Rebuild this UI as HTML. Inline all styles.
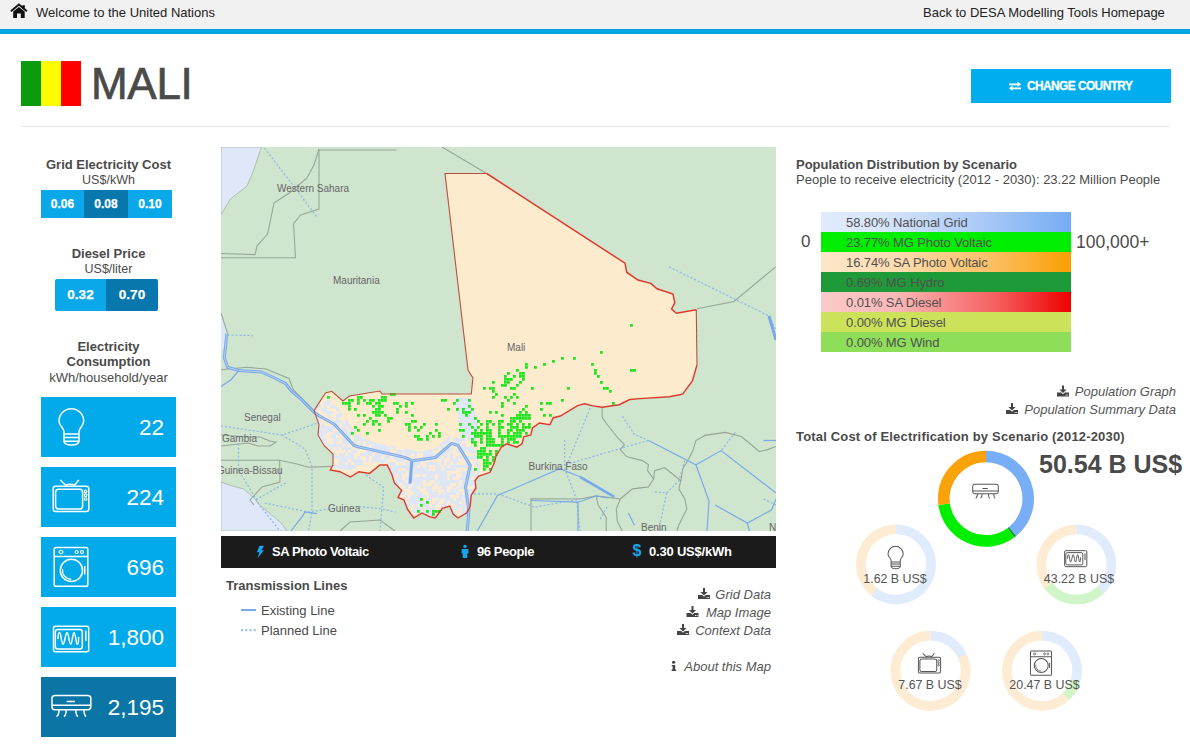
<!DOCTYPE html>
<html><head><meta charset="utf-8">
<style>
*{margin:0;padding:0;box-sizing:border-box}
html,body{width:1190px;height:749px;overflow:hidden;background:#fff;font-family:"Liberation Sans",sans-serif;color:#4a4a4a}
.a{position:absolute;white-space:nowrap}
#topbar{position:absolute;left:0;top:0;width:1190px;height:29px;background:#f1f1f1}
#blueline{position:absolute;left:0;top:29px;width:1190px;height:5px;background:#00a6e2}
.tb{font-size:13px;color:#222;letter-spacing:0;top:5px}
#flag{position:absolute;left:21px;top:61px;width:60px;height:45px}
#flag i{display:block;float:left;width:20px;height:45px}
#mali{left:91px;top:59px;font-size:44px;color:#4a4a4a;letter-spacing:-0.3px;-webkit-text-stroke:0.7px #4a4a4a}
#chg{position:absolute;left:971px;top:69px;width:200px;height:34px;background:#00aeef;color:#fff}
#hr{position:absolute;left:21px;top:126px;width:1149px;height:1px;background:#e8e8e8}
.h{font-weight:bold;font-size:13px;color:#4a4a4a}
.sub{font-size:12.5px;color:#4a4a4a}
.btn{position:absolute;background:#0aa8e8;color:#fff;font-weight:bold;text-align:center;-webkit-text-stroke:0.25px #fff}
.dk{background:#0877ad}
.card{position:absolute;left:41px;width:135px;height:60px;background:#03aaea}
.card .n{position:absolute;right:12px;top:17.5px;font-size:22.5px;color:#fff}
.card svg{position:absolute}
.lnk{font-style:italic;font-size:13px;color:#555}
.bar{position:absolute;left:821px;width:250px;height:20px;font-size:13px;color:#505050;letter-spacing:-0.1px;padding-left:25px;line-height:21px}
.dtext{font-size:12.4px;color:#555;text-align:center}
</style></head><body>
<div id="topbar"></div>
<div id="blueline"></div>
<svg class="a" style="left:0;top:0" width="30" height="22" viewBox="0 0 30 22"><path d="M10.9,11.2 L18.9,4.6 L26.9,11.2" fill="none" stroke="#111" stroke-width="1.9" stroke-linejoin="miter"/><rect x="22.3" y="5.2" width="2.5" height="4" fill="#111"/><path d="M13.2,11.6 L18.9,7 L24.7,11.6 V17.9 H20.8 V13.6 H17 V17.9 H13.2 Z" fill="#111"/></svg>
<div class="a tb" style="left:36px">Welcome to the United Nations</div>
<div class="a tb" style="left:923px">Back to DESA Modelling Tools Homepage</div>

<div id="flag"><i style="background:#0b9a0b"></i><i style="background:#fefe00"></i><i style="background:#fe0000"></i></div>
<div class="a" id="mali">MALI</div>
<div id="chg">
 <svg class="a" style="left:37px;top:11px" width="14" height="12" viewBox="0 0 14 12"><path d="M1,3.4 H9.5 V1.6 L13,4.3 L9.5,7 V5.2 H1 Z M13,7.4 H4.5 V5.6 L1,8.3 L4.5,11 V9.2 H13 Z" fill="#fff"/></svg>
 <div class="a" style="left:56px;top:9px;font-weight:bold;font-size:13px;letter-spacing:-0.6px;transform:scaleX(0.913);transform-origin:0 0;-webkit-text-stroke:0.3px #fff">CHANGE COUNTRY</div>
</div>
<div id="hr"></div>

<!-- left column -->
<div class="a h" style="left:41px;width:135px;text-align:center;top:157px">Grid Electricity Cost</div>
<div class="a sub" style="left:41px;width:135px;text-align:center;top:173px">US$/kWh</div>
<div class="btn" style="left:41px;top:190px;width:43px;height:28px;line-height:28px;font-size:12px">0.06</div>
<div class="btn dk" style="left:84px;top:190px;width:44px;height:28px;line-height:28px;font-size:12px">0.08</div>
<div class="btn" style="left:128px;top:190px;width:44px;height:28px;line-height:28px;font-size:12px">0.10</div>

<div class="a h" style="left:41px;width:135px;text-align:center;top:246px">Diesel Price</div>
<div class="a sub" style="left:41px;width:135px;text-align:center;top:262px">US$/liter</div>
<div class="btn" style="left:55px;top:279px;width:51px;height:32px;line-height:32px;font-size:13.5px;border-radius:2px 0 0 2px">0.32</div>
<div class="btn dk" style="left:106px;top:279px;width:52px;height:32px;line-height:32px;font-size:13.5px;border-radius:0 2px 2px 0">0.70</div>

<div class="a h" style="left:41px;width:135px;text-align:center;top:339px;line-height:15px">Electricity<br>Consumption</div>
<div class="a sub" style="left:41px;width:135px;text-align:center;top:370px;font-size:13px">kWh/household/year</div>

<div class="card" style="top:397px"><div class="n">22</div></div>
<div class="card" style="top:467px"><div class="n">224</div></div>
<div class="card" style="top:537px"><div class="n">696</div></div>
<div class="card" style="top:607px"><div class="n">1,800</div></div>
<div class="card" style="top:677px;background:#0b76a5"><div class="n">2,195</div></div>

<!--ICONS--><svg class="a" style="left:0;top:0" width="200" height="749" viewBox="0 0 200 749"><path d="M64,434 L64,431.5 C64,428 59,426 59,421 A12.35,12.35 0 0 1 83.7,421 C83.7,426 79,428 79,431.5 L79,434 Z M64,434 V441.5 C64.5,444 67.5,445 71.5,445 C75.5,445 78.5,444 79,441.5 V434 M64,437.6 H79 M64,441.2 H79" fill="none" stroke="#fff" stroke-width="1.5" stroke-linejoin="round"/><rect x="53.2" y="486.2" width="35.6" height="25.2" rx="2.5" fill="none" stroke="#fff" stroke-width="1.5"/><rect x="55.6" y="489.2" width="27" height="19.9" rx="3" fill="none" stroke="#fff" stroke-width="1.5"/><circle cx="85.6" cy="491.4" r="1.3" fill="none" stroke="#fff" stroke-width="1.125"/><circle cx="85.6" cy="495.2" r="1.3" fill="none" stroke="#fff" stroke-width="1.125"/><circle cx="85.6" cy="499" r="1.3" fill="none" stroke="#fff" stroke-width="1.125"/><path d="M60.3,480 L65.3,485 Q70,483.5 74.7,485 L78.8,480" fill="none" stroke="#fff" stroke-width="1.5"/><rect x="54.2" y="547.5" width="33.6" height="38.7" rx="1.8" fill="none" stroke="#fff" stroke-width="1.5"/><path d="M54.2,556.4 H87.8 M84.7,566 V574.4" fill="none" stroke="#fff" stroke-width="1.5"/><ellipse cx="61" cy="552" rx="2" ry="1.5" fill="none" stroke="#fff" stroke-width="1.2000000000000002"/><circle cx="76.7" cy="552" r="1.5" fill="none" stroke="#fff" stroke-width="1.2000000000000002"/><circle cx="82" cy="552" r="1.5" fill="none" stroke="#fff" stroke-width="1.2000000000000002"/><circle cx="71.4" cy="570.4" r="11.1" fill="none" stroke="#fff" stroke-width="1.5"/><path d="M62.6,569 A9,9 0 0 0 71.4,579.4" fill="none" stroke="#fff" stroke-width="1.125"/><rect x="53.5" y="626.3" width="35.2" height="25.4" rx="2" fill="none" stroke="#fff" stroke-width="1.5"/><rect x="55.3" y="629.4" width="27" height="19.5" rx="2.5" fill="none" stroke="#fff" stroke-width="1.5"/><path d="M85.8,630.6 V641 M58,639 C58,636 58.5,632.5 59.6,632.5 C61,632.5 61.5,644.3 63,644.3 C64.6,644.3 65.6,632.5 67.1,632.5 C68.6,632.5 69.2,644.3 70.7,644.3 C72.2,644.3 72.6,632.5 74,632.5 C75.5,632.5 76,644.3 77.4,644.3 C78.4,644.3 78.6,640 78.6,637" fill="none" stroke="#fff" stroke-width="1.5"/><rect x="52" y="695.4" width="38.8" height="14.4" rx="3" fill="none" stroke="#fff" stroke-width="1.5"/><path d="M52,705.3 H90.8 M66.7,701.6 H74.8 M59,710 C59,713 59,715 56.5,716.6 M66.2,710 C66.2,713 66.2,715 64,716.6 M75.8,710 C75.8,713 75.8,715 77.8,716.6 M84,710 C84,713 84,715 86,716.6" fill="none" stroke="#fff" stroke-width="1.5"/></svg><!--/ICONS-->
<!-- map -->
<!--MAP--><svg class="a" style="left:221px;top:147px" width="555" height="384" viewBox="221 147 555 384">
<rect x="221" y="147" width="555" height="384" fill="#cfe5ce"/>
<path d="M221,147 L261.4,147 L253,172 L247,186 L230.4,199 L221,215 Z" fill="#dfe8f9" stroke="#a5b5a5" stroke-width="0.8"/>
<path d="M221,482 L231.5,485.7 L243.7,489 L254,498 L259.5,505 L270,513.6 L280.4,522.4 L287.4,531 L221,531 Z" fill="#dfe8f9" stroke="#a5b5a5" stroke-width="0.8"/>
<path d="M221,313 L227.6,333.6 L225,345 L221,352 Z" fill="#dfe8f9"/>
<g fill="none" stroke="#97a697" stroke-width="1.1"><path d="M319,149 L314,165 L307,178 L290,192.5 L274,203 L267.6,234 L257,246 L255,254.6 L221,253.5"/><path d="M221,257.7 L295.5,257.7 L293.5,223.6 L300.7,215 L319,209 L319,150 L396.6,150"/><path d="M442,147 L486.7,173.5"/><path d="M697,308.8 L734,301.5 L775.7,266.8"/><path d="M221,435 L248,437 L260,437 L270,441 L276,442 L270,446 L258,446 L248,443 L221,446"/><path d="M221,460.3 L279.6,460.3 L296,463.8 L308.4,467.3 L331,466.4"/><path d="M279.6,460.3 L280,482 L262,487 L250,500 L254,505"/><path d="M221,369.7 L246.8,367.3 L266,369 L289,378.5 L293.3,389.7 L314,410.6"/><path d="M221,313 L227.6,333.6"/><path d="M602.2,407.2 L602.2,417.3 L606.2,423.3 L618.3,438.5 L624.4,444.5 L620.3,449.6 L626.4,456.6 L642.5,460.6 L648.5,464.7 L647.5,470.7 L653.6,478.8 L654.6,470.7 L664.7,467.7 L680.8,480.8 L678.8,488.9 L684.8,499 L686.9,509 L682.8,517.1 L678.8,525.2 L676.8,531"/><path d="M680.8,480.8 L682.8,468.7 L688.9,458.6 L692.9,450.6 L695.9,440.5 L705,435.4 L725.2,432.4 L741.3,436.5 L753.4,446.5 L759.4,451.6 L767.5,449.6 L776,446.5"/><path d="M531,531 L531,498.8 L580,499 L596.1,495.9 L620.3,499 L616.3,509 L617.3,521.1 L622.3,531"/><path d="M620.3,499 L632.4,488.9 L648.5,486.9 L653.6,478.8"/><path d="M596.1,495.9 L598.1,505 L606.2,517.1 L606.2,531"/><path d="M340,531 L350,522 L380,520 L395,531"/></g>
<g fill="none" stroke="#8fb4e6" stroke-width="1.2" stroke-dasharray="2,2"><path d="M264.5,148 L317,217"/><path d="M669,266.8 L769,316 L776,330"/><path d="M221,426 L282,435 L313.7,424.5 L327.6,419"/><path d="M282,435 L305,449 L312,466.4 L312,512 L308.4,531"/><path d="M238.5,443.7 L238.5,470 L259.5,505 L280,531"/><path d="M256,499.6 L287.4,482"/><path d="M264.7,503 L308.4,512 L333,508.4"/><path d="M359,506.6 L378.3,508.4 L395.8,512"/><path d="M366,475 L383.6,487.4 L380,531"/><path d="M474,493.8 L497.5,493.8 L534.5,507.2 L580,499"/><path d="M564.7,440 L564.7,468.6 L576.5,498.8 L580,531"/><path d="M413.4,477 L472.3,493.8"/><path d="M590.1,408.2 L565.7,467.4"/><path d="M565.7,464.6 L620.3,448.5 L648.5,440.5"/><path d="M622.3,416.3 L634.4,434.4 L648.5,440.5"/><path d="M735.2,432.4 L721.1,450.6"/><path d="M684.8,460.6 L678.8,480.8 L666.7,492.9 L654.6,491.9"/><path d="M666.7,492.9 L660.6,521.1 L658,531"/><path d="M763.5,499 L776,505"/><path d="M600.2,519.1 L608.2,505"/><path d="M227.6,335 L253,335.6"/></g>
<path d="M445,173.5 L486.7,173.5 L625,263.2 L626.7,272.2 L638,280 L650.8,283.4 L657,288.8 L673,294 L674.8,302.6 L671.6,309 L676.4,313.2 L696.3,309.7 L697,365 L692.4,381 L682.8,394 L680.7,394.5 L669.5,396.8 L640,398.6 L629.7,399.5 L619.3,404.7 L602,407.3 L591.5,405.6 L584.6,403.8 L577.6,405.6 L560.3,416 L553.3,417.7 L549.9,424.7 L539.4,423 L532.5,428 L530.8,435 L523.8,436.8 L522,443.8 L516.9,447.2 L506.5,443.8 L501.3,447.2 L496,456 L494.3,462.8 L490,472.3 L483.4,474.7 L478.6,476 L475,480.7 L476,488 L471.3,495 L470,507 L466.5,513 L458,518 L453.3,514.3 L449.7,506 L442.5,508.3 L435.3,518 L429.3,516.7 L422,513 L413.7,518 L407.6,509.5 L404,500 L398,497.5 L401.6,490.3 L394.4,483 L392,474.7 L387.2,465 L380,465 L369.6,473.4 L359,471.7 L350.4,477 L339.9,471.7 L330.3,470 L333,464.7 L333,454 L324,445.5 L318,435 L319,424.5 L314,410.6 L325.4,393 L331.8,391.3 L343,401 L349.4,396 L380,391 L382,394 L471.3,394 L472.9,378 L468,370 Z" fill="#fdebcd"/>
<clipPath id="mc"><path d="M445,173.5 L486.7,173.5 L625,263.2 L626.7,272.2 L638,280 L650.8,283.4 L657,288.8 L673,294 L674.8,302.6 L671.6,309 L676.4,313.2 L696.3,309.7 L697,365 L692.4,381 L682.8,394 L680.7,394.5 L669.5,396.8 L640,398.6 L629.7,399.5 L619.3,404.7 L602,407.3 L591.5,405.6 L584.6,403.8 L577.6,405.6 L560.3,416 L553.3,417.7 L549.9,424.7 L539.4,423 L532.5,428 L530.8,435 L523.8,436.8 L522,443.8 L516.9,447.2 L506.5,443.8 L501.3,447.2 L496,456 L494.3,462.8 L490,472.3 L483.4,474.7 L478.6,476 L475,480.7 L476,488 L471.3,495 L470,507 L466.5,513 L458,518 L453.3,514.3 L449.7,506 L442.5,508.3 L435.3,518 L429.3,516.7 L422,513 L413.7,518 L407.6,509.5 L404,500 L398,497.5 L401.6,490.3 L394.4,483 L392,474.7 L387.2,465 L380,465 L369.6,473.4 L359,471.7 L350.4,477 L339.9,471.7 L330.3,470 L333,464.7 L333,454 L324,445.5 L318,435 L319,424.5 L314,410.6 L325.4,393 L331.8,391.3 L343,401 L349.4,396 L380,391 L382,394 L471.3,394 L472.9,378 L468,370 Z"/></clipPath><g fill="#dfe7f5" clip-path="url(#mc)"><path d="M314,408 L328,398 L340,410 L352,428 L362,438 L380,444 L404,448 L420,452 L436,448 L450,436 L462,436 L476,446 L480,470 L476,490 L472,508 L466,518 L450,522 L430,522 L410,522 L400,505 L392,480 L386,466 L372,464 L350,470 L334,468 L330,460 L322,445 L316,430 Z"/><path d="M455,398 L470,398 L478,420 L476,445 L462,440 Z"/></g>
<path d="M315,423h3v3h-3z M318,408h3v3h-3z M318,411h3v3h-3z M318,414h3v3h-3z M318,423h3v3h-3z M321,402h3v3h-3z M321,405h3v3h-3z M321,411h3v3h-3z M321,414h3v3h-3z M321,417h3v3h-3z M321,420h3v3h-3z M324,399h3v3h-3z M324,414h3v3h-3z M324,417h3v3h-3z M324,420h3v3h-3z M324,423h3v3h-3z M324,435h3v3h-3z M324,444h3v3h-3z M324,447h3v3h-3z M327,405h3v3h-3z M327,408h3v3h-3z M327,417h3v3h-3z M327,420h3v3h-3z M327,423h3v3h-3z M327,432h3v3h-3z M327,435h3v3h-3z M327,438h3v3h-3z M327,441h3v3h-3z M327,447h3v3h-3z M330,402h3v3h-3z M330,408h3v3h-3z M330,414h3v3h-3z M330,420h3v3h-3z M330,423h3v3h-3z M330,432h3v3h-3z M330,438h3v3h-3z M330,441h3v3h-3z M330,450h3v3h-3z M330,456h3v3h-3z M330,459h3v3h-3z M333,408h3v3h-3z M333,411h3v3h-3z M333,414h3v3h-3z M333,417h3v3h-3z M333,423h3v3h-3z M333,429h3v3h-3z M333,447h3v3h-3z M333,450h3v3h-3z M333,459h3v3h-3z M333,462h3v3h-3z M336,411h3v3h-3z M336,426h3v3h-3z M336,429h3v3h-3z M336,435h3v3h-3z M336,441h3v3h-3z M336,450h3v3h-3z M336,453h3v3h-3z M336,459h3v3h-3z M336,462h3v3h-3z M339,417h3v3h-3z M339,423h3v3h-3z M339,426h3v3h-3z M339,429h3v3h-3z M339,435h3v3h-3z M339,438h3v3h-3z M339,441h3v3h-3z M339,447h3v3h-3z M339,450h3v3h-3z M342,414h3v3h-3z M342,417h3v3h-3z M342,420h3v3h-3z M342,432h3v3h-3z M342,444h3v3h-3z M342,450h3v3h-3z M345,426h3v3h-3z M345,453h3v3h-3z M345,462h3v3h-3z M348,429h3v3h-3z M348,444h3v3h-3z M348,450h3v3h-3z M348,459h3v3h-3z M351,432h3v3h-3z M351,435h3v3h-3z M351,438h3v3h-3z M351,444h3v3h-3z M351,447h3v3h-3z M351,462h3v3h-3z M354,432h3v3h-3z M354,447h3v3h-3z M354,453h3v3h-3z M354,456h3v3h-3z M357,441h3v3h-3z M357,444h3v3h-3z M357,450h3v3h-3z M357,453h3v3h-3z M357,465h3v3h-3z M360,447h3v3h-3z M360,450h3v3h-3z M360,456h3v3h-3z M360,465h3v3h-3z M363,441h3v3h-3z M363,444h3v3h-3z M363,450h3v3h-3z M363,456h3v3h-3z M363,459h3v3h-3z M363,462h3v3h-3z M366,462h3v3h-3z M369,444h3v3h-3z M369,447h3v3h-3z M369,456h3v3h-3z M369,459h3v3h-3z M369,462h3v3h-3z M372,453h3v3h-3z M372,462h3v3h-3z M375,450h3v3h-3z M375,462h3v3h-3z M378,462h3v3h-3z M381,456h3v3h-3z M384,453h3v3h-3z M384,462h3v3h-3z M387,444h3v3h-3z M387,459h3v3h-3z M387,465h3v3h-3z M390,447h3v3h-3z M390,450h3v3h-3z M390,456h3v3h-3z M390,459h3v3h-3z M393,450h3v3h-3z M393,453h3v3h-3z M393,459h3v3h-3z M393,477h3v3h-3z M393,480h3v3h-3z M396,447h3v3h-3z M396,462h3v3h-3z M396,474h3v3h-3z M399,447h3v3h-3z M399,462h3v3h-3z M399,468h3v3h-3z M399,483h3v3h-3z M399,486h3v3h-3z M399,495h3v3h-3z M399,501h3v3h-3z M399,504h3v3h-3z M402,447h3v3h-3z M402,453h3v3h-3z M402,456h3v3h-3z M402,462h3v3h-3z M402,468h3v3h-3z M402,474h3v3h-3z M402,477h3v3h-3z M402,486h3v3h-3z M402,495h3v3h-3z M402,498h3v3h-3z M405,459h3v3h-3z M405,471h3v3h-3z M405,474h3v3h-3z M405,480h3v3h-3z M405,489h3v3h-3z M405,492h3v3h-3z M405,498h3v3h-3z M405,501h3v3h-3z M405,513h3v3h-3z M408,456h3v3h-3z M408,459h3v3h-3z M408,471h3v3h-3z M408,486h3v3h-3z M408,489h3v3h-3z M408,492h3v3h-3z M408,495h3v3h-3z M408,507h3v3h-3z M408,510h3v3h-3z M408,513h3v3h-3z M411,453h3v3h-3z M411,456h3v3h-3z M411,468h3v3h-3z M411,483h3v3h-3z M411,492h3v3h-3z M411,504h3v3h-3z M411,507h3v3h-3z M411,513h3v3h-3z M414,474h3v3h-3z M414,513h3v3h-3z M414,516h3v3h-3z M417,453h3v3h-3z M417,456h3v3h-3z M417,465h3v3h-3z M417,474h3v3h-3z M417,486h3v3h-3z M417,504h3v3h-3z M417,513h3v3h-3z M417,519h3v3h-3z M420,453h3v3h-3z M420,456h3v3h-3z M420,459h3v3h-3z M420,462h3v3h-3z M420,489h3v3h-3z M420,498h3v3h-3z M420,504h3v3h-3z M420,510h3v3h-3z M420,519h3v3h-3z M423,462h3v3h-3z M423,465h3v3h-3z M423,474h3v3h-3z M423,480h3v3h-3z M423,483h3v3h-3z M423,486h3v3h-3z M423,489h3v3h-3z M423,492h3v3h-3z M423,498h3v3h-3z M423,507h3v3h-3z M423,516h3v3h-3z M426,459h3v3h-3z M426,483h3v3h-3z M426,492h3v3h-3z M426,495h3v3h-3z M426,501h3v3h-3z M426,513h3v3h-3z M429,465h3v3h-3z M429,468h3v3h-3z M429,480h3v3h-3z M429,483h3v3h-3z M429,501h3v3h-3z M429,504h3v3h-3z M429,516h3v3h-3z M429,519h3v3h-3z M432,450h3v3h-3z M432,459h3v3h-3z M432,465h3v3h-3z M432,468h3v3h-3z M432,480h3v3h-3z M432,486h3v3h-3z M432,489h3v3h-3z M432,498h3v3h-3z M432,501h3v3h-3z M432,513h3v3h-3z M432,519h3v3h-3z M435,450h3v3h-3z M435,459h3v3h-3z M435,474h3v3h-3z M435,477h3v3h-3z M435,483h3v3h-3z M435,486h3v3h-3z M435,498h3v3h-3z M435,504h3v3h-3z M435,507h3v3h-3z M435,513h3v3h-3z M435,516h3v3h-3z M438,447h3v3h-3z M438,450h3v3h-3z M438,453h3v3h-3z M438,459h3v3h-3z M438,462h3v3h-3z M438,486h3v3h-3z M438,489h3v3h-3z M438,492h3v3h-3z M438,501h3v3h-3z M438,504h3v3h-3z M438,507h3v3h-3z M438,510h3v3h-3z M438,513h3v3h-3z M438,516h3v3h-3z M438,519h3v3h-3z M441,456h3v3h-3z M441,465h3v3h-3z M441,468h3v3h-3z M441,489h3v3h-3z M441,498h3v3h-3z M441,501h3v3h-3z M441,510h3v3h-3z M441,516h3v3h-3z M444,444h3v3h-3z M444,447h3v3h-3z M444,459h3v3h-3z M444,462h3v3h-3z M447,444h3v3h-3z M447,453h3v3h-3z M447,456h3v3h-3z M447,459h3v3h-3z M447,465h3v3h-3z M447,471h3v3h-3z M447,474h3v3h-3z M447,477h3v3h-3z M447,486h3v3h-3z M447,489h3v3h-3z M447,501h3v3h-3z M447,504h3v3h-3z M447,507h3v3h-3z M447,510h3v3h-3z M447,513h3v3h-3z M450,435h3v3h-3z M450,438h3v3h-3z M450,441h3v3h-3z M450,444h3v3h-3z M450,450h3v3h-3z M450,462h3v3h-3z M450,471h3v3h-3z M450,483h3v3h-3z M450,486h3v3h-3z M450,495h3v3h-3z M450,504h3v3h-3z M450,513h3v3h-3z M450,516h3v3h-3z M453,435h3v3h-3z M453,447h3v3h-3z M453,450h3v3h-3z M453,453h3v3h-3z M453,456h3v3h-3z M453,471h3v3h-3z M453,477h3v3h-3z M453,483h3v3h-3z M453,495h3v3h-3z M453,498h3v3h-3z M453,504h3v3h-3z M456,435h3v3h-3z M456,447h3v3h-3z M456,453h3v3h-3z M456,462h3v3h-3z M456,468h3v3h-3z M456,471h3v3h-3z M456,474h3v3h-3z M456,477h3v3h-3z M456,486h3v3h-3z M456,492h3v3h-3z M456,495h3v3h-3z M456,510h3v3h-3z M456,513h3v3h-3z M459,435h3v3h-3z M459,444h3v3h-3z M459,453h3v3h-3z M459,459h3v3h-3z M459,462h3v3h-3z M459,468h3v3h-3z M459,471h3v3h-3z M459,474h3v3h-3z M459,480h3v3h-3z M459,483h3v3h-3z M459,489h3v3h-3z M459,501h3v3h-3z M459,507h3v3h-3z M459,510h3v3h-3z M459,513h3v3h-3z M462,441h3v3h-3z M462,453h3v3h-3z M462,456h3v3h-3z M462,459h3v3h-3z M462,462h3v3h-3z M462,468h3v3h-3z M462,489h3v3h-3z M462,492h3v3h-3z M462,498h3v3h-3z M465,438h3v3h-3z M465,441h3v3h-3z M465,444h3v3h-3z M465,450h3v3h-3z M465,453h3v3h-3z M465,468h3v3h-3z M465,480h3v3h-3z M465,486h3v3h-3z M465,504h3v3h-3z M465,513h3v3h-3z M468,441h3v3h-3z M468,444h3v3h-3z M468,453h3v3h-3z M468,459h3v3h-3z M468,465h3v3h-3z M468,471h3v3h-3z M468,486h3v3h-3z M468,501h3v3h-3z M468,507h3v3h-3z M471,444h3v3h-3z M471,453h3v3h-3z M471,459h3v3h-3z M471,462h3v3h-3z M471,465h3v3h-3z M471,477h3v3h-3z M471,486h3v3h-3z M471,495h3v3h-3z M471,498h3v3h-3z M471,504h3v3h-3z M474,447h3v3h-3z M474,453h3v3h-3z M474,459h3v3h-3z M474,465h3v3h-3z M474,471h3v3h-3z M474,477h3v3h-3z" fill="#fcebd0" clip-path="url(#mc)"/>
<g fill="none" stroke="#78a8ea" stroke-width="3" stroke-linejoin="round"><path d="M226.8,333.6 L224.4,357.7 L227.6,367.3 L238.8,370.5 L261.3,372 L272.5,377 L285.3,383.3 L291.7,391.3 L301.3,399.4 L314,412.2 L319,415.7 L334.6,424.5 L354,445.5 L359,447 L370,449.4 L404.8,457.4 L412.8,460.8 L435.5,457.4 L451.5,443.4 L458,445.4 L470.2,465.4 L465.5,487 L468.9,510.6 L467.2,531"/><path d="M411.8,461.8 L410,483.7"/><path d="M769,316 L776,340"/></g>
<g fill="none" stroke="#b7d0f2" stroke-width="1" stroke-linejoin="round"><path d="M226.8,333.6 L224.4,357.7 L227.6,367.3 L238.8,370.5 L261.3,372 L272.5,377 L285.3,383.3 L291.7,391.3 L301.3,399.4 L314,412.2 L319,415.7 L334.6,424.5 L354,445.5 L359,447 L370,449.4 L404.8,457.4 L412.8,460.8 L435.5,457.4 L451.5,443.4 L458,445.4 L470.2,465.4 L465.5,487 L468.9,510.6 L467.2,531"/></g>
<g fill="none" stroke="#7aa8ea" stroke-width="1.2"><path d="M477.3,531 L497.5,495.5 L517.6,487 L559.7,468.6 L580,476.8"/><path d="M531,500.5 L578,502.2 L596.1,496 L608,498"/><path d="M578,502 L578,531"/><path d="M648.5,440.5 L695.9,464.7 L721.1,450.6 L776,492.9"/><path d="M695.9,464.7 L709,501 L707,531"/><path d="M715.1,505 L747.3,523.1 L771.5,510 L776,499"/><path d="M747.3,523.1 L749.4,531"/><path d="M763.5,440.5 L776,440.5"/><path d="M628.4,513 L634.4,525.2"/><path d="M291,531 L303,515.4 L305,512 L317,513.6"/><path d="M238.8,370.5 L230.8,380 L221,386.5"/></g>
<path d="M580,476.8 L614.3,496.9" stroke="#7aa8ea" stroke-width="2.6"/>
<path d="M327,396h2.8v2.8h-2.8z M342,402h2.8v2.8h-2.8z M345,402h2.8v2.8h-2.8z M348,399h2.8v2.8h-2.8z M348,402h2.8v2.8h-2.8z M348,405h2.8v2.8h-2.8z M348,408h2.8v2.8h-2.8z M351,399h2.8v2.8h-2.8z M351,432h2.8v2.8h-2.8z M354,408h2.8v2.8h-2.8z M354,426h2.8v2.8h-2.8z M357,396h2.8v2.8h-2.8z M357,399h2.8v2.8h-2.8z M357,402h2.8v2.8h-2.8z M357,414h2.8v2.8h-2.8z M357,429h2.8v2.8h-2.8z M360,396h2.8v2.8h-2.8z M363,399h2.8v2.8h-2.8z M363,414h2.8v2.8h-2.8z M363,423h2.8v2.8h-2.8z M366,402h2.8v2.8h-2.8z M366,420h2.8v2.8h-2.8z M366,432h2.8v2.8h-2.8z M369,399h2.8v2.8h-2.8z M369,402h2.8v2.8h-2.8z M369,417h2.8v2.8h-2.8z M372,399h2.8v2.8h-2.8z M372,405h2.8v2.8h-2.8z M372,411h2.8v2.8h-2.8z M372,420h2.8v2.8h-2.8z M372,423h2.8v2.8h-2.8z M375,402h2.8v2.8h-2.8z M375,408h2.8v2.8h-2.8z M375,411h2.8v2.8h-2.8z M375,414h2.8v2.8h-2.8z M375,420h2.8v2.8h-2.8z M378,399h2.8v2.8h-2.8z M378,402h2.8v2.8h-2.8z M378,405h2.8v2.8h-2.8z M378,408h2.8v2.8h-2.8z M378,411h2.8v2.8h-2.8z M378,414h2.8v2.8h-2.8z M378,423h2.8v2.8h-2.8z M378,429h2.8v2.8h-2.8z M381,396h2.8v2.8h-2.8z M381,399h2.8v2.8h-2.8z M381,405h2.8v2.8h-2.8z M381,411h2.8v2.8h-2.8z M384,396h2.8v2.8h-2.8z M384,399h2.8v2.8h-2.8z M384,414h2.8v2.8h-2.8z M387,417h2.8v2.8h-2.8z M387,420h2.8v2.8h-2.8z M390,393h2.8v2.8h-2.8z M390,417h2.8v2.8h-2.8z M393,393h2.8v2.8h-2.8z M393,402h2.8v2.8h-2.8z M396,402h2.8v2.8h-2.8z M396,408h2.8v2.8h-2.8z M396,411h2.8v2.8h-2.8z M399,405h2.8v2.8h-2.8z M405,402h2.8v2.8h-2.8z M405,405h2.8v2.8h-2.8z M405,411h2.8v2.8h-2.8z M405,423h2.8v2.8h-2.8z M408,423h2.8v2.8h-2.8z M408,426h2.8v2.8h-2.8z M408,429h2.8v2.8h-2.8z M411,402h2.8v2.8h-2.8z M411,414h2.8v2.8h-2.8z M411,420h2.8v2.8h-2.8z M414,420h2.8v2.8h-2.8z M414,426h2.8v2.8h-2.8z M414,435h2.8v2.8h-2.8z M417,429h2.8v2.8h-2.8z M417,435h2.8v2.8h-2.8z M417,438h2.8v2.8h-2.8z M417,510h2.8v2.8h-2.8z M420,426h2.8v2.8h-2.8z M420,438h2.8v2.8h-2.8z M420,498h2.8v2.8h-2.8z M420,504h2.8v2.8h-2.8z M423,423h2.8v2.8h-2.8z M426,435h2.8v2.8h-2.8z M426,438h2.8v2.8h-2.8z M426,501h2.8v2.8h-2.8z M426,510h2.8v2.8h-2.8z M429,432h2.8v2.8h-2.8z M432,435h2.8v2.8h-2.8z M432,510h2.8v2.8h-2.8z M432,513h2.8v2.8h-2.8z M435,423h2.8v2.8h-2.8z M435,429h2.8v2.8h-2.8z M435,510h2.8v2.8h-2.8z M438,432h2.8v2.8h-2.8z M438,435h2.8v2.8h-2.8z M438,510h2.8v2.8h-2.8z M441,399h2.8v2.8h-2.8z M444,399h2.8v2.8h-2.8z M447,408h2.8v2.8h-2.8z M453,402h2.8v2.8h-2.8z M456,399h2.8v2.8h-2.8z M456,408h2.8v2.8h-2.8z M459,423h2.8v2.8h-2.8z M459,429h2.8v2.8h-2.8z M462,408h2.8v2.8h-2.8z M462,411h2.8v2.8h-2.8z M462,429h2.8v2.8h-2.8z M462,435h2.8v2.8h-2.8z M465,411h2.8v2.8h-2.8z M465,414h2.8v2.8h-2.8z M468,399h2.8v2.8h-2.8z M468,405h2.8v2.8h-2.8z M468,411h2.8v2.8h-2.8z M468,423h2.8v2.8h-2.8z M471,408h2.8v2.8h-2.8z M471,426h2.8v2.8h-2.8z M471,432h2.8v2.8h-2.8z M471,438h2.8v2.8h-2.8z M471,441h2.8v2.8h-2.8z M474,417h2.8v2.8h-2.8z M474,429h2.8v2.8h-2.8z M474,432h2.8v2.8h-2.8z M474,435h2.8v2.8h-2.8z M474,441h2.8v2.8h-2.8z M474,444h2.8v2.8h-2.8z M474,468h2.8v2.8h-2.8z M477,420h2.8v2.8h-2.8z M477,426h2.8v2.8h-2.8z M477,432h2.8v2.8h-2.8z M477,435h2.8v2.8h-2.8z M477,450h2.8v2.8h-2.8z M477,453h2.8v2.8h-2.8z M477,456h2.8v2.8h-2.8z M480,423h2.8v2.8h-2.8z M480,429h2.8v2.8h-2.8z M480,432h2.8v2.8h-2.8z M480,435h2.8v2.8h-2.8z M480,438h2.8v2.8h-2.8z M480,441h2.8v2.8h-2.8z M480,447h2.8v2.8h-2.8z M480,450h2.8v2.8h-2.8z M480,453h2.8v2.8h-2.8z M480,456h2.8v2.8h-2.8z M483,387h2.8v2.8h-2.8z M483,432h2.8v2.8h-2.8z M483,447h2.8v2.8h-2.8z M483,450h2.8v2.8h-2.8z M483,453h2.8v2.8h-2.8z M483,459h2.8v2.8h-2.8z M483,462h2.8v2.8h-2.8z M483,465h2.8v2.8h-2.8z M483,468h2.8v2.8h-2.8z M486,420h2.8v2.8h-2.8z M486,423h2.8v2.8h-2.8z M486,426h2.8v2.8h-2.8z M486,429h2.8v2.8h-2.8z M486,432h2.8v2.8h-2.8z M486,435h2.8v2.8h-2.8z M486,438h2.8v2.8h-2.8z M486,441h2.8v2.8h-2.8z M486,444h2.8v2.8h-2.8z M486,453h2.8v2.8h-2.8z M486,456h2.8v2.8h-2.8z M486,459h2.8v2.8h-2.8z M486,462h2.8v2.8h-2.8z M486,465h2.8v2.8h-2.8z M489,387h2.8v2.8h-2.8z M489,411h2.8v2.8h-2.8z M489,420h2.8v2.8h-2.8z M489,429h2.8v2.8h-2.8z M489,432h2.8v2.8h-2.8z M489,435h2.8v2.8h-2.8z M489,438h2.8v2.8h-2.8z M489,441h2.8v2.8h-2.8z M489,444h2.8v2.8h-2.8z M489,450h2.8v2.8h-2.8z M489,453h2.8v2.8h-2.8z M489,462h2.8v2.8h-2.8z M489,468h2.8v2.8h-2.8z M492,381h2.8v2.8h-2.8z M492,387h2.8v2.8h-2.8z M492,390h2.8v2.8h-2.8z M492,396h2.8v2.8h-2.8z M492,423h2.8v2.8h-2.8z M492,438h2.8v2.8h-2.8z M492,441h2.8v2.8h-2.8z M492,444h2.8v2.8h-2.8z M492,456h2.8v2.8h-2.8z M492,459h2.8v2.8h-2.8z M495,393h2.8v2.8h-2.8z M495,411h2.8v2.8h-2.8z M495,444h2.8v2.8h-2.8z M495,450h2.8v2.8h-2.8z M495,453h2.8v2.8h-2.8z M498,420h2.8v2.8h-2.8z M498,423h2.8v2.8h-2.8z M498,426h2.8v2.8h-2.8z M498,429h2.8v2.8h-2.8z M498,432h2.8v2.8h-2.8z M498,435h2.8v2.8h-2.8z M498,444h2.8v2.8h-2.8z M501,384h2.8v2.8h-2.8z M501,402h2.8v2.8h-2.8z M501,405h2.8v2.8h-2.8z M501,414h2.8v2.8h-2.8z M501,420h2.8v2.8h-2.8z M501,426h2.8v2.8h-2.8z M501,435h2.8v2.8h-2.8z M501,438h2.8v2.8h-2.8z M501,441h2.8v2.8h-2.8z M501,444h2.8v2.8h-2.8z M504,375h2.8v2.8h-2.8z M504,378h2.8v2.8h-2.8z M504,381h2.8v2.8h-2.8z M504,384h2.8v2.8h-2.8z M504,396h2.8v2.8h-2.8z M504,435h2.8v2.8h-2.8z M507,372h2.8v2.8h-2.8z M507,378h2.8v2.8h-2.8z M507,381h2.8v2.8h-2.8z M507,399h2.8v2.8h-2.8z M507,423h2.8v2.8h-2.8z M507,429h2.8v2.8h-2.8z M507,432h2.8v2.8h-2.8z M507,435h2.8v2.8h-2.8z M507,438h2.8v2.8h-2.8z M507,441h2.8v2.8h-2.8z M510,378h2.8v2.8h-2.8z M510,387h2.8v2.8h-2.8z M510,396h2.8v2.8h-2.8z M510,417h2.8v2.8h-2.8z M510,420h2.8v2.8h-2.8z M510,423h2.8v2.8h-2.8z M510,426h2.8v2.8h-2.8z M510,429h2.8v2.8h-2.8z M510,435h2.8v2.8h-2.8z M510,438h2.8v2.8h-2.8z M513,375h2.8v2.8h-2.8z M513,387h2.8v2.8h-2.8z M513,393h2.8v2.8h-2.8z M513,402h2.8v2.8h-2.8z M513,417h2.8v2.8h-2.8z M513,420h2.8v2.8h-2.8z M513,426h2.8v2.8h-2.8z M513,432h2.8v2.8h-2.8z M513,435h2.8v2.8h-2.8z M513,438h2.8v2.8h-2.8z M513,441h2.8v2.8h-2.8z M516,369h2.8v2.8h-2.8z M516,384h2.8v2.8h-2.8z M516,396h2.8v2.8h-2.8z M516,414h2.8v2.8h-2.8z M516,417h2.8v2.8h-2.8z M516,423h2.8v2.8h-2.8z M516,426h2.8v2.8h-2.8z M516,429h2.8v2.8h-2.8z M516,432h2.8v2.8h-2.8z M516,435h2.8v2.8h-2.8z M516,441h2.8v2.8h-2.8z M519,372h2.8v2.8h-2.8z M519,375h2.8v2.8h-2.8z M519,381h2.8v2.8h-2.8z M519,411h2.8v2.8h-2.8z M519,414h2.8v2.8h-2.8z M519,417h2.8v2.8h-2.8z M519,420h2.8v2.8h-2.8z M519,429h2.8v2.8h-2.8z M519,432h2.8v2.8h-2.8z M519,435h2.8v2.8h-2.8z M522,372h2.8v2.8h-2.8z M522,375h2.8v2.8h-2.8z M522,378h2.8v2.8h-2.8z M522,408h2.8v2.8h-2.8z M522,414h2.8v2.8h-2.8z M522,417h2.8v2.8h-2.8z M522,423h2.8v2.8h-2.8z M522,426h2.8v2.8h-2.8z M522,429h2.8v2.8h-2.8z M525,363h2.8v2.8h-2.8z M525,366h2.8v2.8h-2.8z M525,405h2.8v2.8h-2.8z M525,411h2.8v2.8h-2.8z M525,414h2.8v2.8h-2.8z M525,417h2.8v2.8h-2.8z M525,426h2.8v2.8h-2.8z M525,432h2.8v2.8h-2.8z M528,414h2.8v2.8h-2.8z M528,417h2.8v2.8h-2.8z M528,423h2.8v2.8h-2.8z M528,426h2.8v2.8h-2.8z M531,387h2.8v2.8h-2.8z M534,366h2.8v2.8h-2.8z M540,402h2.8v2.8h-2.8z M540,408h2.8v2.8h-2.8z M543,363h2.8v2.8h-2.8z M543,414h2.8v2.8h-2.8z M546,402h2.8v2.8h-2.8z M549,402h2.8v2.8h-2.8z M549,414h2.8v2.8h-2.8z M552,360h2.8v2.8h-2.8z M561,357h2.8v2.8h-2.8z M561,399h2.8v2.8h-2.8z M567,387h2.8v2.8h-2.8z M573,357h2.8v2.8h-2.8z M591,363h2.8v2.8h-2.8z M594,369h2.8v2.8h-2.8z M594,372h2.8v2.8h-2.8z M597,375h2.8v2.8h-2.8z M600,351h2.8v2.8h-2.8z M600,381h2.8v2.8h-2.8z M603,387h2.8v2.8h-2.8z M606,387h2.8v2.8h-2.8z M609,390h2.8v2.8h-2.8z M612,402h2.8v2.8h-2.8z M630,324h2.8v2.8h-2.8z M630,369h2.8v2.8h-2.8z M633,369h2.8v2.8h-2.8z" fill="#1ee61e"/>
<path d="M486.7,173.5 L625,263.2 L626.7,272.2 L638,280 L650.8,283.4 L657,288.8 L673,294 L674.8,302.6 L671.6,309 L676.4,313.2 L696.3,309.7" fill="none" stroke="#dc3a2e" stroke-width="1.5"/>
<path d="M697,365 L692.4,381 L682.8,394 L680.7,394.5 L669.5,396.8 L640,398.6 L629.7,399.5 L619.3,404.7 L602,407.3 L591.5,405.6 L584.6,403.8 L577.6,405.6 L560.3,416 L553.3,417.7 L549.9,424.7 L539.4,423 L532.5,428 L530.8,435 L523.8,436.8 L522,443.8 L516.9,447.2 L506.5,443.8 L501.3,447.2 L496,456 L494.3,462.8 L490,472.3 L483.4,474.7 L478.6,476 L475,480.7 L476,488 L471.3,495 L470,507 L466.5,513 L458,518 L453.3,514.3 L449.7,506 L442.5,508.3 L435.3,518 L429.3,516.7 L422,513 L413.7,518 L407.6,509.5 L404,500 L398,497.5 L401.6,490.3 L394.4,483 L392,474.7 L387.2,465 L380,465 L369.6,473.4 L359,471.7 L350.4,477 L339.9,471.7 L330.3,470 L333,464.7" fill="none" stroke="#dc3a2e" stroke-width="1.4"/>
<path d="M696.3,309.7 L697,365" fill="none" stroke="#b9503f" stroke-width="1.1"/>
<path d="M333,464.7 L333,454 L324,445.5 L318,435 L319,424.5 L314,410.6 L325.4,393 L331.8,391.3 L343,401 L349.4,396 L380,391 L382,394 L471.3,394 L472.9,378 L468,370 L445,173.5 L486.7,173.5" fill="none" stroke="#b9503f" stroke-width="1.1"/>
<g font-family="Liberation Sans" font-size="10" fill="#666"><text x="277" y="191.5">Western Sahara</text><text x="333" y="284">Mauritania</text><text x="507" y="351">Mali</text><text x="244" y="421">Senegal</text><text x="222" y="442">Gambia</text><text x="217" y="474">Guinea-Bissau</text><text x="328" y="512">Guinea</text><text x="528.6" y="470">Burkina Faso</text><text x="641" y="531">Benin</text><text x="769" y="531">N</text></g>
</svg><!--/MAP-->
<div class="a" style="left:221px;top:536px;width:555px;height:32px;background:#1b1b1b"></div>


<!-- right column -->
<div class="a h" style="left:796px;top:157px">Population Distribution by Scenario</div>
<div class="a sub" style="left:796px;top:172px;font-size:13px">People to receive electricity (2012 - 2030): 23.22 Million People</div>
<div class="a" style="left:801px;top:232px;font-size:17px;color:#4a4a4a">0</div>
<div class="a" style="left:1076px;top:231.5px;font-size:17.5px;color:#4a4a4a">100,000+</div>
<div class="bar" style="top:212px;background:linear-gradient(90deg,#e0ecfc 0%,#d6e5fa 25%,#a9c9f7 65%,#76acf4 100%)">58.80% National Grid</div>
<div class="bar" style="top:232px;background:#00ee00">23.77% MG Photo Voltaic</div>
<div class="bar" style="top:252px;background:linear-gradient(90deg,#fde6c8 0%,#fddcb0 30%,#fbbd60 70%,#f9a000 100%)">16.74% SA Photo Voltaic</div>
<div class="bar" style="top:272px;background:#1f9a38">0.69% MG Hydro</div>
<div class="bar" style="top:292px;background:linear-gradient(90deg,#fccaca 0%,#fbb8b8 30%,#f56060 70%,#ee0000 100%)">0.01% SA Diesel</div>
<div class="bar" style="top:312px;background:#cce25a">0.00% MG Diesel</div>
<div class="bar" style="top:332px;background:#8ede5a">0.00% MG Wind</div>

<div class="a lnk" style="right:14px;top:384px">Population Graph</div>
<div class="a lnk" style="right:14px;top:402px">Population Summary Data</div>
<div class="a h" style="left:796px;top:429px;letter-spacing:0.17px">Total Cost of Electrification by Scenario (2012-2030)</div>
<div class="a" style="left:1039px;top:450px;font-size:25px;font-weight:bold;color:#4a4a4a">50.54 B US$</div>

<div class="a h" style="left:226px;top:578px">Transmission Lines</div>
<div class="a" style="left:241px;top:608.5px;width:15px;height:2.5px;background:#78aaea"></div>
<svg class="a" style="left:241px;top:628px" width="16" height="4"><path d="M0,1h2.2v2.2h-2.2zM4.2,1h2.2v2.2h-2.2zM8.4,1h2.2v2.2h-2.2zM12.6,1h2.2v2.2h-2.2z" fill="#9fc2ef"/></svg>
<div class="a sub" style="left:261px;top:603px;font-size:13px">Existing Line</div>
<div class="a sub" style="left:261px;top:623px;font-size:13px">Planned Line</div>
<div class="a lnk" style="right:419px;top:587px">Grid Data</div>
<div class="a lnk" style="right:419px;top:605px">Map Image</div>
<div class="a lnk" style="right:419px;top:623px">Context Data</div>
<div class="a lnk" style="right:419px;top:659px">About this Map</div>

<div class="a" style="left:272px;top:544px;font-size:13px;color:#fff;font-weight:bold;letter-spacing:-0.4px">SA Photo Voltaic</div>
<div class="a" style="left:477px;top:544px;font-size:13px;color:#fff;font-weight:bold;letter-spacing:-0.4px">96 People</div>
<div class="a" style="left:649px;top:544px;font-size:13px;color:#fff;font-weight:bold;letter-spacing:-0.2px">0.30 US$/kWh</div>
<!--DONUTS--><svg class="a" style="left:780px;top:420px" width="410" height="329" viewBox="780 420 410 329"><path d="M986.00,456.50 A42.2,42.2 0 0 1 1012.56,531.50" fill="none" stroke="#78aef5" stroke-width="11.6"/><path d="M1012.56,531.50 A42.2,42.2 0 0 1 1010.80,532.84" fill="none" stroke="#1f9a38" stroke-width="11.6"/><path d="M1010.80,532.84 A42.2,42.2 0 0 1 944.16,504.21" fill="none" stroke="#00ee00" stroke-width="11.6"/><path d="M944.16,504.21 A42.2,42.2 0 0 1 986.00,456.50" fill="none" stroke="#f9a20a" stroke-width="11.6"/><path d="M896.00,529.30 A35.1,35.1 0 1 1 873.91,591.68" fill="none" stroke="#e0ebfb" stroke-width="9.7"/><path d="M873.91,591.68 A35.1,35.1 0 0 1 896.00,529.30" fill="none" stroke="#fdebd3" stroke-width="9.7"/><path d="M1076.40,529.40 A35.1,35.1 0 0 1 1100.56,589.96" fill="none" stroke="#e0ebfb" stroke-width="9.7"/><path d="M1100.56,589.96 A35.1,35.1 0 0 1 1048.37,585.62" fill="none" stroke="#d0f5c8" stroke-width="9.7"/><path d="M1048.37,585.62 A35.1,35.1 0 0 1 1076.40,529.40" fill="none" stroke="#fdebd3" stroke-width="9.7"/><path d="M930.50,635.70 A35.1,35.1 0 0 1 962.31,655.97" fill="none" stroke="#e0ebfb" stroke-width="9.7"/><path d="M962.31,655.97 A35.1,35.1 0 1 1 930.50,635.70" fill="none" stroke="#fdebd3" stroke-width="9.7"/><path d="M1042.00,635.70 A35.1,35.1 0 0 1 1075.74,680.47" fill="none" stroke="#e0ebfb" stroke-width="9.7"/><path d="M1075.74,680.47 A35.1,35.1 0 0 1 1065.94,696.47" fill="none" stroke="#d0f5c8" stroke-width="9.7"/><path d="M1065.94,696.47 A35.1,35.1 0 1 1 1042.00,635.70" fill="none" stroke="#fdebd3" stroke-width="9.7"/><g transform="translate(938.54,27.01) scale(0.6577)"><rect x="52" y="695.4" width="38.8" height="14.4" rx="3" fill="none" stroke="#555" stroke-width="1.5205365234729014"/><path d="M52,705.3 H90.8 M66.7,701.6 H74.8 M59,710 C59,713 59,715 56.5,716.6 M66.2,710 C66.2,713 66.2,715 64,716.6 M75.8,710 C75.8,713 75.8,715 77.8,716.6 M84,710 C84,713 84,715 86,716.6" fill="none" stroke="#555" stroke-width="1.5205365234729014"/></g><g transform="translate(851.75,295.14) scale(0.6146)"><path d="M64,434 L64,431.5 C64,428 59,426 59,421 A12.35,12.35 0 0 1 83.7,421 C83.7,426 79,428 79,431.5 L79,434 Z M64,434 V441.5 C64.5,444 67.5,445 71.5,445 C75.5,445 78.5,444 79,441.5 V434 M64,437.6 H79 M64,441.2 H79" fill="none" stroke="#555" stroke-width="1.6271337390529892" stroke-linejoin="round"/></g><g transform="translate(1030.90,155.66) scale(0.6307)"><rect x="53.5" y="626.3" width="35.2" height="25.4" rx="2" fill="none" stroke="#555" stroke-width="1.5854399689661838"/><rect x="55.3" y="629.4" width="27" height="19.5" rx="2.5" fill="none" stroke="#555" stroke-width="1.5854399689661838"/><path d="M85.8,630.6 V641 M58,639 C58,636 58.5,632.5 59.6,632.5 C61,632.5 61.5,644.3 63,644.3 C64.6,644.3 65.6,632.5 67.1,632.5 C68.6,632.5 69.2,644.3 70.7,644.3 C72.2,644.3 72.6,632.5 74,632.5 C75.5,632.5 76,644.3 77.4,644.3 C78.4,644.3 78.6,640 78.6,637" fill="none" stroke="#555" stroke-width="1.5854399689661838"/></g><g transform="translate(885.20,353.89) scale(0.6239)"><rect x="53.2" y="486.2" width="35.6" height="25.2" rx="2.5" fill="none" stroke="#555" stroke-width="1.6028704983869893"/><rect x="55.6" y="489.2" width="27" height="19.9" rx="3" fill="none" stroke="#555" stroke-width="1.6028704983869893"/><circle cx="85.6" cy="491.4" r="1.3" fill="none" stroke="#555" stroke-width="1.2021528737902418"/><circle cx="85.6" cy="495.2" r="1.3" fill="none" stroke="#555" stroke-width="1.2021528737902418"/><circle cx="85.6" cy="499" r="1.3" fill="none" stroke="#555" stroke-width="1.2021528737902418"/><path d="M60.3,480 L65.3,485 Q70,483.5 74.7,485 L78.8,480" fill="none" stroke="#555" stroke-width="1.6028704983869893"/></g><g transform="translate(996.44,307.47) scale(0.6276)"><rect x="54.2" y="547.5" width="33.6" height="38.7" rx="1.8" fill="none" stroke="#555" stroke-width="1.5934134381264127"/><path d="M54.2,556.4 H87.8 M84.7,566 V574.4" fill="none" stroke="#555" stroke-width="1.5934134381264127"/><ellipse cx="61" cy="552" rx="2" ry="1.5" fill="none" stroke="#555" stroke-width="1.2747307505011303"/><circle cx="76.7" cy="552" r="1.5" fill="none" stroke="#555" stroke-width="1.2747307505011303"/><circle cx="82" cy="552" r="1.5" fill="none" stroke="#555" stroke-width="1.2747307505011303"/><circle cx="71.4" cy="570.4" r="11.1" fill="none" stroke="#555" stroke-width="1.5934134381264127"/><path d="M62.6,569 A9,9 0 0 0 71.4,579.4" fill="none" stroke="#555" stroke-width="1.1950600785948096"/></g></svg><!--/DONUTS-->

<div class="a dtext" style="left:845px;width:100px;top:572px">1.62 B US$</div>
<div class="a dtext" style="left:1029px;width:100px;top:572px">43.22 B US$</div>
<div class="a dtext" style="left:880px;width:100px;top:678px">7.67 B US$</div>
<div class="a dtext" style="left:994.5px;width:100px;top:678px">20.47 B US$</div>
<!--MISC--><svg class="a" style="left:0;top:0" width="1190" height="749" viewBox="0 0 1190 749"><path transform="translate(698,588)" d="M5,0 H7 V4 H9.6 L6,7.6 L2.4,4 H5 Z M0,7 H4.2 L6,8.8 L7.8,7 H12 V11 H0 Z" fill="#444"/><rect x="706.6" y="597" width="1" height="1" fill="#fff"/><rect x="708.2" y="597" width="1" height="1" fill="#fff"/><path transform="translate(686.5,606)" d="M5,0 H7 V4 H9.6 L6,7.6 L2.4,4 H5 Z M0,7 H4.2 L6,8.8 L7.8,7 H12 V11 H0 Z" fill="#444"/><rect x="695.1" y="615" width="1" height="1" fill="#fff"/><rect x="696.7" y="615" width="1" height="1" fill="#fff"/><path transform="translate(677,624)" d="M5,0 H7 V4 H9.6 L6,7.6 L2.4,4 H5 Z M0,7 H4.2 L6,8.8 L7.8,7 H12 V11 H0 Z" fill="#444"/><rect x="685.6" y="633" width="1" height="1" fill="#fff"/><rect x="687.2" y="633" width="1" height="1" fill="#fff"/><path transform="translate(1057,385.5)" d="M5,0 H7 V4 H9.6 L6,7.6 L2.4,4 H5 Z M0,7 H4.2 L6,8.8 L7.8,7 H12 V11 H0 Z" fill="#444"/><rect x="1065.6" y="394.5" width="1" height="1" fill="#fff"/><rect x="1067.2" y="394.5" width="1" height="1" fill="#fff"/><path transform="translate(1006,403)" d="M5,0 H7 V4 H9.6 L6,7.6 L2.4,4 H5 Z M0,7 H4.2 L6,8.8 L7.8,7 H12 V11 H0 Z" fill="#444"/><rect x="1014.6" y="412" width="1" height="1" fill="#fff"/><rect x="1016.2" y="412" width="1" height="1" fill="#fff"/><path d="M673.2,661 a1.3,1.3 0 1 0 0.01,0 Z" fill="#444"/><circle cx="674" cy="662.2" r="1.3" fill="#444"/><path d="M671.8,665 H675.2 V669.6 H676.2 V671 H671.6 V669.6 H672.6 V666.3 H671.8 Z" fill="#444"/><path d="M259.5,545.7 L263.8,545.7 L261.6,550.3 L264,550.3 L257.5,558.2 L259.4,552.3 L256.8,552.3 Z" fill="#1aa3e8"/><circle cx="465" cy="546.4" r="1.7" fill="#1aa3e8"/><path d="M461.6,549 H468.4 V553.6 H467.3 V558 H462.7 V553.6 H461.6 Z" fill="#1aa3e8"/></svg><div class="a" style="left:632.5px;top:541.5px;font-size:16px;font-weight:bold;color:#1aa3e8">$</div><!--/MISC-->
</body></html>
